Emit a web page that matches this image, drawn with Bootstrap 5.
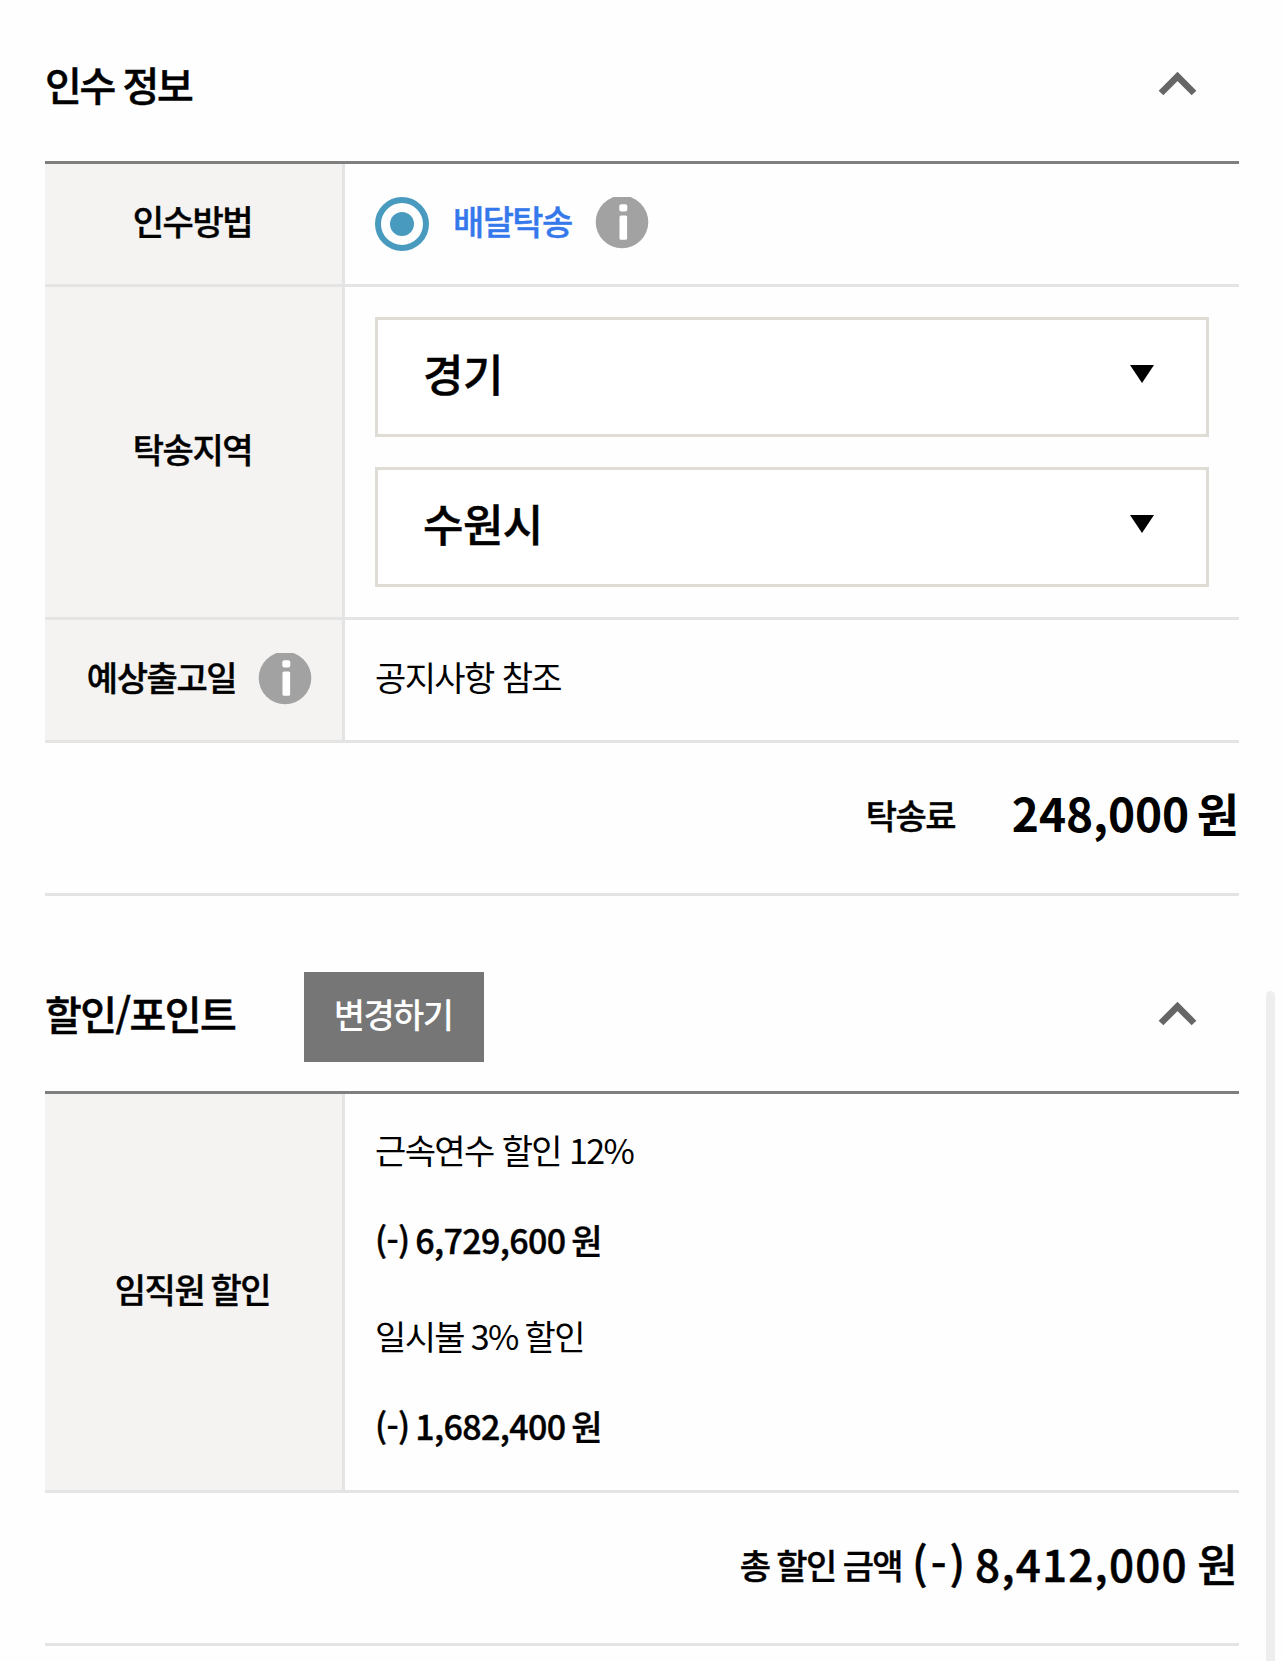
<!DOCTYPE html>
<html lang="ko">
<head>
<meta charset="utf-8">
<meta name="viewport" content="width=device-width, initial-scale=1">
<title>인수 정보</title>
<link href="https://cdn.jsdelivr.net/npm/bootstrap@5.3.0/dist/css/bootstrap.min.css" rel="stylesheet">
<style>
body{font-family:"Noto Sans CJK KR",sans-serif;color:#000;background:#fefefe;font-size:34px;line-height:48px;letter-spacing:-1.6px;height:1661px;overflow:hidden;white-space:nowrap}
.page{padding:0 45px}
.sec-head{height:161px;padding:6px 42px 0 0}
.sec-head.second{height:195px;padding-top:40px}
.sec-title{font-size:40px;font-weight:500;letter-spacing:-2.4px;margin:0;line-height:60px;-webkit-text-stroke:.5px #000}
.second .sec-title{letter-spacing:-1.6px;margin-top:-1px}
.info-table{border-top:3px solid #7f7f7f}
.info-row{border-bottom:3px solid #e4e4e4}
.row-sm{height:123px}
.row-lg{height:399px}
.info-th{width:300px;background:#f4f3f2;border-right:3px solid #e4e4e4;padding-right:2px;font-weight:500;letter-spacing:-1.4px;word-spacing:-2px;-webkit-text-stroke:.4px #000}
.info-th.with-ico{padding:0 0 0 12px}
.with-ico .info-ico{margin-left:22px}
.info-td{padding:30px}
.stack{gap:30px}
.lift{padding-bottom:6px}
.info-ico{margin-bottom:2px;margin-left:23.5px}
.radio-ring{width:54px;height:54px;border:6px solid #489bbf;border-radius:50%}
.radio-dot{width:24px;height:24px;border-radius:50%;background:#489bbf}
.pick{color:#3578ec;font-weight:500;-webkit-text-stroke:.4px #3578ec}
.region{height:120px;border:3px solid #dfdcd5;border-radius:0;background:#fff;color:#000;font-size:44px;font-weight:500;letter-spacing:-.6px;padding:0 52px 6px 45px;-webkit-text-stroke:.5px #000}
.region span{margin-top:-2px}
.btn-change,.btn-change:hover{width:180px;height:90px;background:#767676;color:#fff;border:0;border-radius:0;font-size:34px;font-weight:500;letter-spacing:-1.6px;padding:0 2px 8px 0;margin:7px 0 0 69px}
.sum{height:153px;border-bottom:3px solid #e4e4e4;font-weight:500}
.fee-label{-webkit-text-stroke:.4px #000;word-spacing:-1px}
.price{font-size:46px;font-weight:700;letter-spacing:-.1px;word-spacing:-5px;margin:0 0 0 57px;padding-bottom:12px}
.total{font-size:44px;font-weight:500;letter-spacing:1.2px;word-spacing:-4px;margin-left:10px;padding-bottom:10px;-webkit-text-stroke:.5px #000}
.sign{letter-spacing:3px;margin-right:-2.5px}
.discounts{padding:0 30px 8px}
.line90{height:90px;line-height:90px}
.amount{font-weight:500;letter-spacing:-.65px;word-spacing:-3px;-webkit-text-stroke:.4px #000}
.gap-top{margin-top:6px;word-spacing:-1.2px}
.scroll-thumb{position:fixed;left:1266px;top:991px;width:9px;height:690px;background:#eee;border-radius:5px}
</style>
</head>
<body>
<main class="page">
<section>
  <header class="sec-head d-flex align-items-center justify-content-between">
    <h2 class="sec-title">인수 정보</h2>
    <svg width="40" height="26" viewBox="0 0 40 26"><path d="M4 22 20.5 5.5 37 22" fill="none" stroke="#666" stroke-width="6.6"/></svg>
  </header>
  <div class="info-table">
    <div class="info-row row-sm d-flex">
      <div class="info-th d-flex align-items-center justify-content-center"><span class="lift">인수방법</span></div>
      <div class="info-td flex-fill d-flex align-items-center">
        <span class="radio-ring d-flex align-items-center justify-content-center"><span class="radio-dot"></span></span>
        <span class="pick lift ms-4">배달탁송</span>
        <svg class="info-ico" width="54" height="52" viewBox="0 0 54 52"><circle cx="27" cy="25" r="26.3" fill="#a2a2a2"/><g fill="#fff"><rect x="24.3" y="7.3" width="8" height="7.2" rx="2"/><rect x="24.5" y="18.5" width="7.6" height="24.3" rx="1.5"/></g></svg>
      </div>
    </div>
    <div class="info-row d-flex">
      <div class="info-th d-flex align-items-center justify-content-center"><span class="lift">탁송지역</span></div>
      <div class="info-td stack flex-fill d-flex flex-column">
        <button class="region d-flex align-items-center justify-content-between"><span>경기</span><svg width="24" height="18"><path d="M0 0h24L12 18z"/></svg></button>
        <button class="region d-flex align-items-center justify-content-between"><span>수원시</span><svg width="24" height="18"><path d="M0 0h24L12 18z"/></svg></button>
      </div>
    </div>
    <div class="info-row row-sm d-flex">
      <div class="info-th with-ico d-flex align-items-center justify-content-center"><span class="lift">예상출고일</span>
        <svg class="info-ico" width="54" height="52" viewBox="0 0 54 52"><circle cx="27" cy="25" r="26.3" fill="#a2a2a2"/><g fill="#fff"><rect x="24.3" y="7.3" width="8" height="7.2" rx="2"/><rect x="24.5" y="18.5" width="7.6" height="24.3" rx="1.5"/></g></svg></div>
      <div class="info-td flex-fill d-flex align-items-center"><span class="lift">공지사항 참조</span></div>
    </div>
  </div>
  <div class="sum d-flex align-items-center justify-content-end"><span class="fee-label lift">탁송료</span><span class="price">248,000 원</span></div>
</section>
<section>
  <header class="sec-head second d-flex align-items-center justify-content-between">
    <div class="d-flex align-items-center"><h2 class="sec-title">할인/포인트</h2><button class="btn btn-change">변경하기</button></div>
    <svg width="40" height="26" viewBox="0 0 40 26"><path d="M4 22 20.5 5.5 37 22" fill="none" stroke="#666" stroke-width="6.6"/></svg>
  </header>
  <div class="info-table">
    <div class="info-row row-lg d-flex">
      <div class="info-th d-flex align-items-center justify-content-center"><span class="lift">임직원 할인</span></div>
      <div class="discounts flex-fill d-flex flex-column justify-content-center">
        <div class="line90">근속연수 할인 12%</div>
        <div class="line90 amount">(-) 6,729,600 원</div>
        <div class="line90 gap-top">일시불 3% 할인</div>
        <div class="line90 amount">(-) 1,682,400 원</div>
      </div>
    </div>
  </div>
  <div class="sum d-flex align-items-center justify-content-end"><span class="fee-label lift">총 할인 금액</span><span class="total"><span class="sign">(-)</span> 8,412,000 원</span></div>
</section>
</main>
<div class="scroll-thumb"></div>
<script src="https://cdn.jsdelivr.net/npm/bootstrap@5.3.0/dist/js/bootstrap.bundle.min.js"></script>
</body>
</html>
